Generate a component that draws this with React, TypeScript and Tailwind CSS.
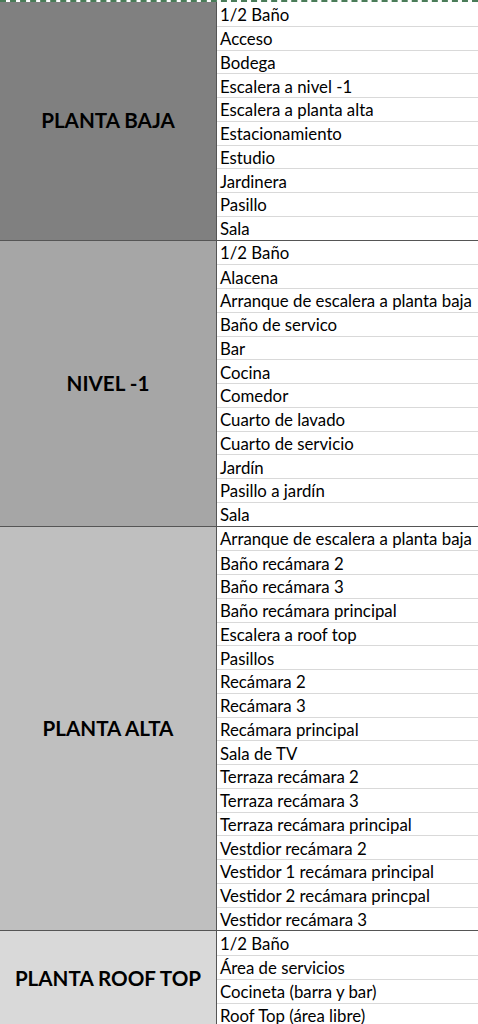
const sections = [
  {
    name: 'PLANTA BAJA',
    bg: 'bg-[#808080]',
    rooms: ['1/2 Baño', 'Acceso', 'Bodega', 'Escalera a nivel -1', 'Escalera a planta alta', 'Estacionamiento', 'Estudio', 'Jardinera', 'Pasillo', 'Sala'],
  },
  {
    name: 'NIVEL -1',
    bg: 'bg-[#a6a6a6]',
    rooms: ['1/2 Baño', 'Alacena', 'Arranque de escalera a planta baja', 'Baño de servico', 'Bar', 'Cocina', 'Comedor', 'Cuarto de lavado', 'Cuarto de servicio', 'Jardín', 'Pasillo a jardín', 'Sala'],
  },
  {
    name: 'PLANTA ALTA',
    bg: 'bg-[#bfbfbf]',
    rooms: ['Arranque de escalera a planta baja', 'Baño recámara 2', 'Baño recámara 3', 'Baño recámara principal', 'Escalera a roof top', 'Pasillos', 'Recámara 2', 'Recámara 3', 'Recámara principal', 'Sala de TV', 'Terraza recámara 2', 'Terraza recámara 3', 'Terraza recámara principal', 'Vestdior recámara 2', 'Vestidor 1 recámara principal', 'Vestidor 2 recámara princpal', 'Vestidor recámara 3'],
  },
  {
    name: 'PLANTA ROOF TOP',
    bg: 'bg-[#d9d9d9]',
    rooms: ['1/2 Baño', 'Área de servicios', 'Cocineta (barra y bar)', 'Roof Top (área libre)'],
  },
];

export default function App() {
  return (
    <div className="w-[478px] h-[1024px] overflow-hidden bg-white text-black font-['Lato','Liberation_Sans',sans-serif]">
      <div className="h-[2px] border-t-2 border-dashed border-[#4a7c59]" />
      {sections.map((s, i) => (
        <div key={s.name} className={`flex ${i > 0 ? 'border-t border-[#555]' : ''}`}>
          <div className={`w-[217px] shrink-0 flex items-center justify-center border-r border-[#555] ${s.bg}`}>
            <span className="text-[20.6px] font-bold">{s.name}</span>
          </div>
          <div className="flex-1">
            {s.rooms.map((r, j) => (
              <div
                key={j}
                className={`h-[23.75px] pl-[3px] pt-[1px] flex items-center text-[16.8px] whitespace-nowrap ${j > 0 ? 'border-t border-[#d9d9d9]' : ''}`}
              >
                {r}
              </div>
            ))}
          </div>
        </div>
      ))}
    </div>
  );
}
